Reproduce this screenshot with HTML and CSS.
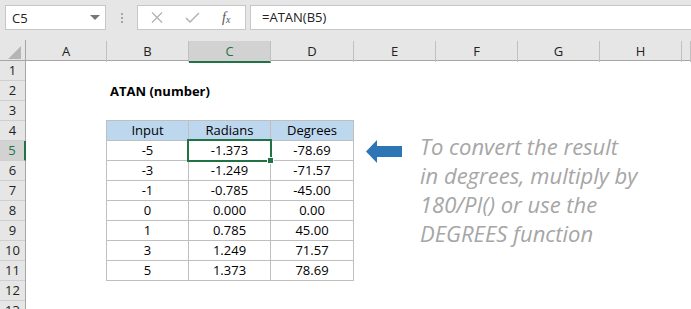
FILE: index.html
```html
<!DOCTYPE html>
<html>
<head>
	<meta name="viewport" content="width=device-width, initial-scale=1.0">
	<link rel="stylesheet" href="styles.css">
</head>
<body>
    <div class="toolbar">
        <div class="namebox">
            <span>C5</span>
            <span class="drop"></span>
        </div>
        <div class="dots"><i></i><i></i><i></i></div>
        <div class="fnbox">
            <svg class="ico" width="12" height="11" viewBox="0 0 12 11"><path d="M1 0.5 L11 10.5 M11 0.5 L1 10.5" stroke="#b3b3b3" stroke-width="1.3" fill="none"/></svg>
            <svg class="ico" width="15" height="11" viewBox="0 0 15 11"><path d="M1 6 L5 10 L14 1" stroke="#b3b3b3" stroke-width="1.5" fill="none"/></svg>
            <span class="fx">f<sub>x</sub></span>
        </div>
        <div class="formula">=ATAN(B5)</div>
    </div>

    <div class="colhead">
        <div class="corner"><span class="tri"></span></div>
        <div class="ch">A</div>
        <div class="ch">B</div>
        <div class="ch active">C</div>
        <div class="ch">D</div>
        <div class="ch">E</div>
        <div class="ch">F</div>
        <div class="ch">G</div>
        <div class="ch">H</div>
        <div class="ch"></div>
    </div>

    <div class="body">
        <div class="rowhead">
            <div class="rh">1</div>
            <div class="rh">2</div>
            <div class="rh">3</div>
            <div class="rh">4</div>
            <div class="rh active">5</div>
            <div class="rh">6</div>
            <div class="rh">7</div>
            <div class="rh">8</div>
            <div class="rh">9</div>
            <div class="rh">10</div>
            <div class="rh">11</div>
            <div class="rh">12</div>
            <div class="rh">13</div>
        </div>

        <div class="canvas">
            <div class="title">ATAN (number)</div>

            <div class="data">
                <div class="hd">Input</div><div class="hd">Radians</div><div class="hd">Degrees</div>
                <div>-5</div><div class="sel">-1.373</div><div>-78.69</div>
                <div>-3</div><div>-1.249</div><div>-71.57</div>
                <div>-1</div><div>-0.785</div><div>-45.00</div>
                <div>0</div><div>0.000</div><div>0.00</div>
                <div>1</div><div>0.785</div><div>45.00</div>
                <div>3</div><div>1.249</div><div>71.57</div>
                <div>5</div><div>1.373</div><div>78.69</div>
            </div>

            <svg class="arrow" width="36" height="23" viewBox="0 0 36 23"><polygon points="0,11.5 11,0 11,6 36,6 36,17 11,17 11,23" fill="#2e75b6"/></svg>
            <div class="note">To convert the result<br>in degrees, multiply by<br>180/PI() or use the<br>DEGREES function</div>
        </div>
    </div>
</body>
</html>
```

FILE: styles.css
```css
body{
    margin: 0;
    font-family: "Open Sans", "Liberation Sans", sans-serif;
    background: #fff;
    overflow: hidden;
}

/* formula bar */
.toolbar{
    height: 40px;
    background: #e6e6e6;
    display: flex;
    align-items: flex-start;
    padding-top: 5px;
    box-sizing: border-box;
}
.namebox{
    width: 101px;
    height: 25px;
    margin-left: 5px;
    background: #fff;
    border: 1px solid #c6c6c6;
    box-sizing: border-box;
    display: flex;
    align-items: center;
    justify-content: space-between;
    padding: 0 5px 0 6px;
    font-size: 13px;
    color: #222;
}
.drop{
    width: 0;
    height: 0;
    border-left: 5px solid transparent;
    border-right: 5px solid transparent;
    border-top: 5px solid #777;
}
.dots{
    width: 31px;
    height: 25px;
    display: flex;
    flex-direction: column;
    align-items: center;
    justify-content: center;
    gap: 2px;
}
.dots i{
    width: 2px;
    height: 2px;
    background: #a6a6a6;
}
.fnbox{
    width: 109px;
    height: 25px;
    background: #fff;
    border: 1px solid #c6c6c6;
    box-sizing: border-box;
    display: flex;
    align-items: center;
    padding-left: 13px;
    gap: 0;
}
.fnbox .ico:first-child{
    margin-right: 22px;
}
.fnbox .ico:nth-child(2){
    margin-right: 22px;
}
.fx{
    font-family: "Liberation Serif", serif;
    font-style: italic;
    font-size: 14px;
    color: #555;
    line-height: 1;
}
.fx sub{
    font-size: 10px;
    vertical-align: -1px;
}
.formula{
    flex: 1;
    height: 25px;
    margin-left: 4px;
    background: #fff;
    border: 1px solid #c6c6c6;
    border-right: none;
    box-sizing: border-box;
    padding-left: 11px;
    font-size: 13px;
    line-height: 23px;
    color: #222;
}

/* headers */
.colhead{
    display: grid;
    grid-template-columns: 26px 81px 82px 82px 83px 82px 82px 82px 82px 1fr;
    height: 21px;
    background: #e6e6e6;
    border-bottom: 1px solid #a6a6a6;
    box-sizing: border-box;
}
.ch{
    border-right: 1px solid #c0c0c0;
    margin-top: 1px;
    font-size: 13px;
    text-align: center;
    line-height: 20px;
    color: #222;
}
.ch.active{
    background: #d2d2d2;
    color: #217346;
    border-bottom: 2px solid #217346;
    margin-bottom: -1px;
}
.corner{
    border-right: 1px solid #a6a6a6;
    position: relative;
}
.tri{
    position: absolute;
    right: 4px;
    bottom: 3px;
    width: 0;
    height: 0;
    border-left: 13px solid transparent;
    border-bottom: 13px solid #b5b5b5;
}

.body{
    display: flex;
}
.rowhead{
    width: 26px;
    background: #e6e6e6;
    border-right: 1px solid #a6a6a6;
    box-sizing: border-box;
}
.rh{
    height: 20px;
    border-bottom: 1px solid #cfcfcf;
    box-sizing: border-box;
    font-size: 13px;
    text-align: center;
    line-height: 19px;
    color: #222;
}
.rh.active{
    background: #d2d2d2;
    color: #217346;
    border-right: 2px solid #217346;
    margin-right: -1px;
}

/* sheet */
.canvas{
    flex: 1;
    position: relative;
    display: grid;
    grid-template-columns: 81px 82px 82px 83px 82px 82px 82px 82px 1fr;
    grid-template-rows: repeat(13, 20px);
}
.title{
    grid-row: 2;
    grid-column: 2 / 4;
    padding-left: 3px;
    font-size: 13px;
    font-weight: bold;
    line-height: 20px;
    color: #000;
}
.data{
    grid-row: 4 / 12;
    grid-column: 2 / 5;
    align-self: start;
    margin-left: -1px;
    margin-top: -1px;
    display: grid;
    grid-template-columns: 81px 81px 82px;
    grid-auto-rows: 19px;
    gap: 1px;
    border: 1px solid #bfbfbf;
    background: #bfbfbf;
}
.data div{
    background: #fff;
    text-align: center;
    font-size: 13px;
    line-height: 19px;
    color: #000;
}
.data .hd{
    background: #bdd7ee;
}
.data .sel{
    position: relative;
    outline: 2px solid #217346;
    outline-offset: 0;
}
.data .sel::after{
    content: "";
    position: absolute;
    right: -4px;
    bottom: -4px;
    width: 5px;
    height: 5px;
    background: #217346;
    border: 1px solid #fff;
}

.arrow{
    position: absolute;
    left: 340px;
    top: 79px;
}
.note{
    position: absolute;
    left: 394px;
    top: 71px;
    font-size: 22px;
    font-style: italic;
    line-height: 29px;
    color: #a6a6a6;
    white-space: nowrap;
}
```
